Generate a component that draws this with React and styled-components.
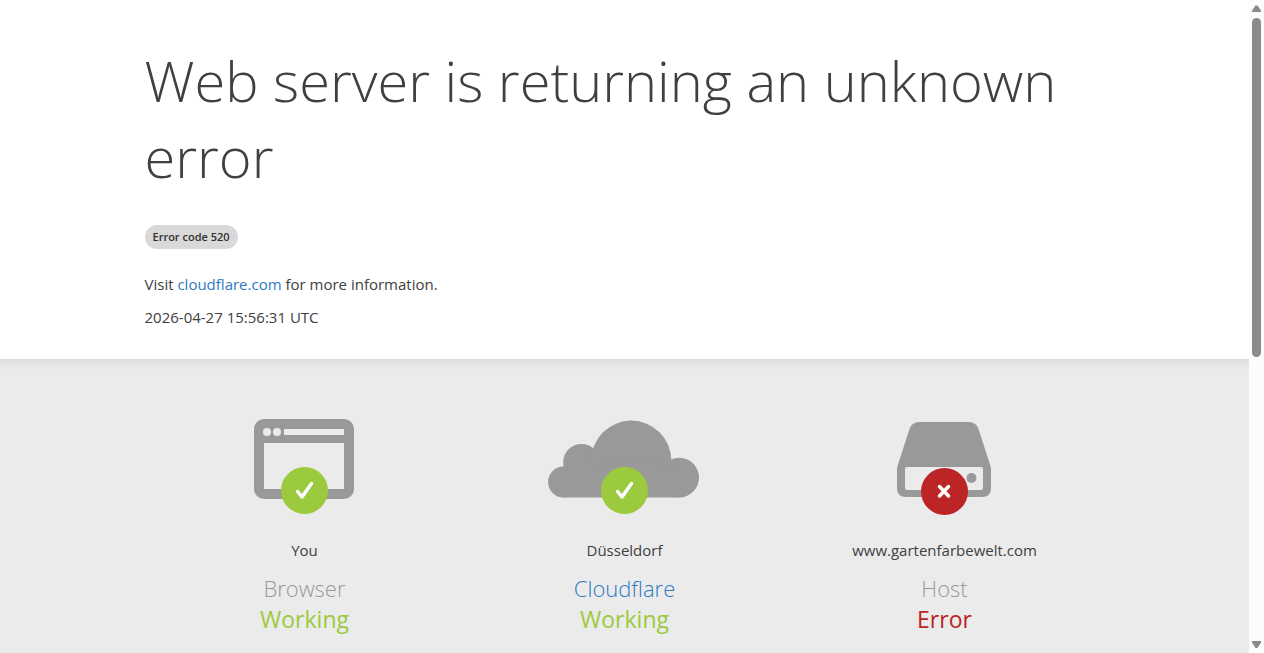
import React from "react";
import styled, { createGlobalStyle } from "styled-components";

const COLORS = {
  text: "#404040",
  link: "#2f7bbf",
  gray: "#999999",
  green: "#9bca3e",
  red: "#bd2426",
  panel: "#ebebeb",
};

const STATUSES = [
  {
    id: "browser",
    place: "You",
    name: "Browser",
    state: "Working",
    ok: true,
    Icon: BrowserIcon,
  },
  {
    id: "cloudflare",
    place: "Düsseldorf",
    name: "Cloudflare",
    href: "https://www.cloudflare.com",
    state: "Working",
    ok: true,
    Icon: CloudIcon,
  },
  {
    id: "host",
    place: "www.gartenfarbewelt.com",
    name: "Host",
    state: "Error",
    ok: false,
    Icon: ServerIcon,
  },
];

function BrowserIcon() {
  return (
    <svg width="102" height="80" viewBox="0 0 102 80" aria-hidden="true">
      <rect width="100" height="80" rx="10" fill={COLORS.gray} />
      <circle cx="13" cy="13" r="4" fill={COLORS.panel} />
      <circle cx="23" cy="13" r="4" fill={COLORS.panel} />
      <path d="M30 10h60v6H30zM10 24h80v46H10z" fill={COLORS.panel} />
    </svg>
  );
}

function CloudIcon() {
  return (
    <svg width="154" height="80" viewBox="0 0 154 80" aria-hidden="true">
      <g fill={COLORS.gray}>
        <circle cx="15.500" cy="63" r="15.400" />
        <circle cx="33.500" cy="43.200" r="18.300" />
        <circle cx="83.300" cy="41.600" r="40" />
        <circle cx="131.200" cy="58.600" r="19.800" />
        <path d="M15.500 47.600H45l40-10 38 10 8.200 10v20.800H15.500z" />
      </g>
    </svg>
  );
}

function ServerIcon() {
  return (
    <svg width="96" height="78" viewBox="0 0 96 78" aria-hidden="true">
      <path
        d="M22 3h50q7 0 9.500 7l11 34q1.500 4 1.500 7v18q0 9-9 9H9q-9 0-9-9V51q0-3 1.500-7l11-34Q15 3 22 3z"
        fill={COLORS.gray}
      />
      <rect x="8" y="48" width="78" height="23" rx="2" fill={COLORS.panel} />
      <circle cx="74.500" cy="59" r="5" fill={COLORS.gray} />
    </svg>
  );
}

function StatusMark({ ok }) {
  return (
    <Mark viewBox="0 0 48 48" aria-hidden="true">
      {ok ? (
        <>
          <circle cx="23.500" cy="23.500" r="23.500" fill={COLORS.green} />
          <path d="M16.500 24.500l4.500 5.500L30.500 16.500" />
        </>
      ) : (
        <>
          <circle cx="23.500" cy="24.500" r="23.500" fill={COLORS.red} />
          <path d="M18.500 19.500l9 9.500M27.500 19.500l-9 9.500" />
        </>
      )}
    </Mark>
  );
}

function StatusColumn({ status }) {
  const { Icon, place, name, href, state, ok } = status;

  return (
    <Column>
      <IconBox>
        <Icon />
        <StatusMark ok={ok} />
      </IconBox>
      <Place>{place}</Place>
      <Name>{href ? <Link href={href}>{name}</Link> : name}</Name>
      <State $ok={ok}>{state}</State>
    </Column>
  );
}

export default function App() {
  return (
    <>
      <GlobalStyle />
      <Window>
        <Page>
          <Header>
            <Title>Web server is returning an unknown error</Title>
            <CodeBadge>Error code 520</CodeBadge>
            <Info>
              Visit <Link href="https://www.cloudflare.com">cloudflare.com</Link> for
              more information.
            </Info>
            <Info>2026-04-27 15:56:31 UTC</Info>
          </Header>
          <Panel>
            <Columns>
              {STATUSES.map((status) => (
                <StatusColumn key={status.id} status={status} />
              ))}
            </Columns>
          </Panel>
        </Page>
        <Rail aria-hidden="true">
          <Arrow viewBox="0 0 9 7">
            <path d="M3.500 0.500h2L9 5.500v1.500H0V5.500z" />
          </Arrow>
          <Track>
            <Thumb />
          </Track>
          <Arrow viewBox="0 0 9 7">
            <path d="M0 0h9v1.500L5.500 7h-2L0 1.500z" />
          </Arrow>
        </Rail>
      </Window>
    </>
  );
}

const GlobalStyle = createGlobalStyle`
  *, *::before, *::after {
    box-sizing: border-box;
  }

  body {
    margin: 0;
    background: #fff;
    color: ${COLORS.text};
    font-family: "Segoe UI", "Open Sans", "Noto Sans", sans-serif;
    font-size: 15px;
    line-height: 24px;
  }

  h1, h2, p {
    margin: 0;
  }
`;

const Window = styled.div`
  display: flex;
  height: 100vh;
  overflow: hidden;
`;

const Page = styled.main`
  flex: 1;
  display: flex;
  flex-direction: column;
  min-width: 0;
`;

const Header = styled.header`
  width: 100%;
  max-width: 960px;
  margin: 0 auto;
  padding: 42px 0 30px;
`;

const Title = styled.h1`
  font-size: 56px;
  font-weight: 300;
  line-height: 76px;
`;

const CodeBadge = styled.span`
  display: block;
  width: fit-content;
  margin: 31px 0 23px;
  padding: 0 8px;
  border-radius: 12px;
  background: #d9d9d9;
  color: #313131;
  font-size: 11px;
  font-weight: 600;
`;

const Info = styled.p`
  & + & {
    margin-top: 9px;
  }
`;

const Link = styled.a`
  color: ${COLORS.link};
  text-decoration: none;
`;

const Panel = styled.section`
  flex: 1;
  padding: 60px 0 20px;
  background: linear-gradient(to bottom, #dedede, ${COLORS.panel} 10px);
`;

const Columns = styled.div`
  display: grid;
  grid-template-columns: repeat(3, 1fr);
  max-width: 960px;
  margin: 0 auto;
`;

const Column = styled.div`
  display: flex;
  flex-direction: column;
  align-items: center;
  text-align: center;
`;

const IconBox = styled.div`
  position: relative;
  display: flex;
  justify-content: center;
  height: 96px;
  margin-bottom: 23px;
`;

const Mark = styled.svg`
  position: absolute;
  bottom: 0;
  left: 50%;
  width: 48px;
  height: 48px;
  transform: translateX(-50%);

  path {
    fill: none;
    stroke: #fff;
    stroke-width: 3.5;
    stroke-linecap: round;
    stroke-linejoin: round;
  }
`;

const Place = styled.span`
  margin-bottom: 11px;
`;

const Name = styled.h2`
  color: ${COLORS.gray};
  font-size: 22px;
  font-weight: 300;
  line-height: 31px;
`;

const State = styled.span`
  color: ${({ $ok }) => ($ok ? COLORS.green : COLORS.red)};
  font-size: 23px;
  line-height: 31px;
`;

const Rail = styled.div`
  display: flex;
  flex-direction: column;
  align-items: center;
  justify-content: space-between;
  width: 15px;
  padding: 5px 0;
  background: #fcfcfc;
`;

const Arrow = styled.svg`
  width: 9px;
  height: 7px;
  fill: #8b8b8b;
`;

const Track = styled.div`
  flex: 1;
  width: 9px;
  padding: 6px 0;
`;

const Thumb = styled.div`
  height: 55%;
  border-radius: 5px;
  background: #8b8b8b;
`;
